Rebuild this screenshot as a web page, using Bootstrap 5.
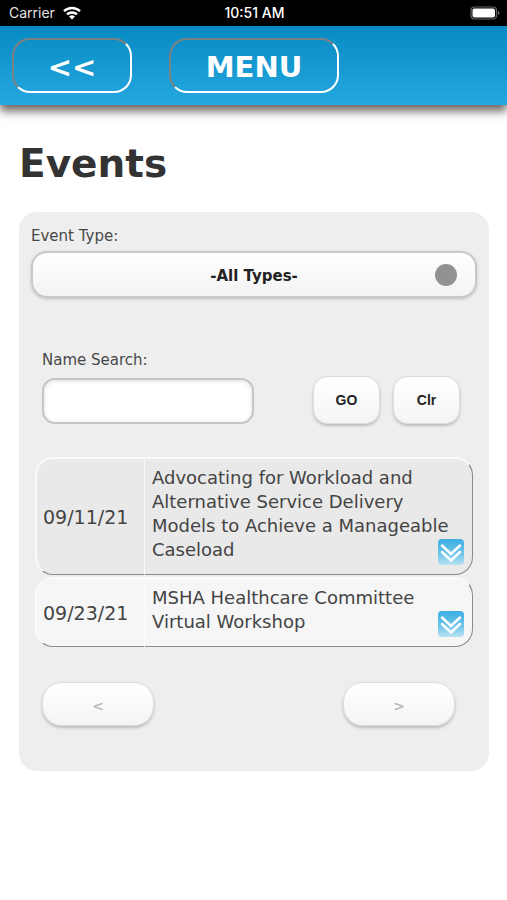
<!DOCTYPE html>
<html lang="en">
<head>
<meta charset="utf-8">
<meta name="viewport" content="width=device-width, initial-scale=1">
<title>Events</title>
<link href="https://cdn.jsdelivr.net/npm/bootstrap@5.3.0/dist/css/bootstrap.min.css" rel="stylesheet">
<style>
  body { font-family: Verdana, "DejaVu Sans", sans-serif; color: #333; background: #fff; }
  .status-bar { height: 26px; background: #000; color: #e4e4e4; font: 14px/26px Inter, sans-serif; padding: 0 7px 0 9px; }
  .status-bar > div { flex: 1 1 0; }
  .clock { color: #fff; font-weight: 500; }
  .top-bar { height: 79px; padding: 0 12px; gap: 37px; background: linear-gradient(#078ac2, #25a8e0); box-shadow: 0 6px 9px #6b625c; }
  .bar-btn { height: 55px; padding: 0; border: 2px solid; border-color: #7d8183 #fff #fff #7d8183; border-radius: 18px; background: none; color: #fff; font-weight: 700; font-size: 29px; line-height: 51px; padding-top: 2px; }
  .back-btn { width: 120px; }
  .menu-btn { width: 170px; }
  .page-main { padding: 35px 18px 24px 19px; }
  .page-title { font-size: 39px; line-height: 48px; font-weight: 700; margin: 0 0 24px; }
  .panel { background: #eee; border-radius: 18px; padding: 12px 12px 45px; }
  .field-label { font-size: 15px; line-height: 24px; color: #484848; }
  .type-box { margin-top: 3px; }
  .type-select { height: 47px; width: 100%; appearance: none; border: 2px solid #c8c8c8; border-radius: 16px; background: linear-gradient(#fff, #f3f3f3); box-shadow: 0 1px 3px #bbb; font-weight: 700; font-size: 15px; padding-top: 4px; color: #222; text-align: center; text-align-last: center; }
  .type-dot { width: 22px; height: 22px; background: #929292; right: 20px; top: 13px; pointer-events: none; }
  .search-row { margin: 50px 17px 0 11px; }
  .search-input { width: 212px; height: 46px; margin-top: 6px; padding: 0 12px; border: 2px solid #c6c6c6; border-radius: 13px; background: #fff; box-shadow: inset 0 1px 4px #ddd; }
  .btn-pair { gap: 13px; }
  .soft-btn { height: 48px; width: 67px; padding: 0; border: 1px solid #dcdcdc; border-radius: 15px; background: linear-gradient(#fff, #f5f5f5); box-shadow: 0 2px 3px #bbb; font: 700 14px "Liberation Sans", Arial, sans-serif; color: #222; }
  .pager-btn { width: 112px; height: 44px; padding-top: 3px; border-radius: 20px; font-family: "DejaVu Sans", sans-serif; }
  .pager-btn:disabled { color: #bbb; }
  .event-table { margin: 31px 0 0 4px; width: calc(100% - 8px); border-collapse: separate; border-spacing: 0 2px; font-size: 18px; line-height: 24px; color: #444; }
  .event-table td { border: 2px solid #fafafa; border-bottom: 1px solid #8c8c8c; padding: 7px 6px 12px; background: #e9e9e9; }
  .event-table tr:nth-child(even) td { background: #f6f6f6; }
  .event-table .date-cell { width: 110px; padding: 9px 0 8px 6px; font-size: 19px; border-right-width: 1px; border-radius: 18px 0 0 18px; }
  .event-table .name-cell { border-left-width: 0; border-right: 1px solid #8c8c8c; border-radius: 0 18px 18px 0; padding-left: 7px; }
  .more-btn { right: 8px; bottom: 9px; }
  .more-btn svg { width: 26px; height: 26px; }
  .pager-row { margin: 33px 22px 0 11px; }
</style>
</head>
<body>
<svg class="position-absolute" width="0" height="0" aria-hidden="true">
  <linearGradient id="expand-fill" x1="0" y1="0" x2="0" y2="1"><stop offset="0" stop-color="#3aaee3"/><stop offset=".6" stop-color="#72c6ea"/><stop offset="1" stop-color="#b9e2f2"/></linearGradient>
  <symbol id="expand-icon" viewBox="0 0 26 26">
    <rect width="26" height="26" rx="4" fill="url(#expand-fill)"/>
    <path d="M4 6.500 13 15 22 6.500M4 13 13 21.500 22 13" fill="none" stroke="#fff" stroke-width="2.500" stroke-linecap="round"/>
  </symbol>
</svg>
<div class="status-bar position-relative z-1 d-flex align-items-center">
  <div class="d-flex align-items-center gap-2">
    <span>Carrier</span>
    <svg width="18" height="14" viewBox="0 0 18 14" aria-hidden="true"><g fill="none" stroke="#fff" stroke-width="2.5"><path d="M1 5.2a11.5 11.5 0 0 1 16 0"/><path d="M4 8.400a7.200 7.200 0 0 1 10 0"/></g><path d="M9 13.600 6 10.600a4.300 4.300 0 0 1 6 0z" fill="#fff"/></svg>
  </div>
  <div class="clock text-center">10:51 AM</div>
  <div class="d-flex justify-content-end">
    <svg width="30" height="14" viewBox="0 0 30 14" aria-hidden="true"><rect x="1" y="1" width="25.500" height="12" rx="3.500" fill="none" stroke="#666" stroke-width="1.200"/><rect x="2.500" y="2.500" width="22.500" height="9" rx="2" fill="#fff"/><path d="M28 5v4q1.500-.5 1.500-2T28 5" fill="#777"/></svg>
  </div>
</div>
<nav class="top-bar d-flex align-items-center">
  <button class="bar-btn back-btn" type="button">&lt;&lt;</button>
  <button class="bar-btn menu-btn" type="button">MENU</button>
</nav>
<main class="page-main">
  <h1 class="page-title">Events</h1>
  <section class="panel">
    <label class="field-label d-block" for="eventType">Event Type:</label>
    <div class="type-box position-relative">
      <select class="type-select d-block" id="eventType"><option>-All Types-</option></select>
      <span class="type-dot position-absolute rounded-circle"></span>
    </div>
    <form class="search-row d-flex justify-content-between align-items-end">
      <div>
        <label class="field-label d-block" for="nameSearch">Name Search:</label>
        <input class="search-input d-block" id="nameSearch" type="text">
      </div>
      <div class="btn-pair d-flex">
        <button class="soft-btn" type="button">GO</button>
        <button class="soft-btn" type="reset">Clr</button>
      </div>
    </form>
    <table class="event-table">
      <tbody>
        <tr>
          <td class="date-cell">09/11/21</td>
          <td class="name-cell position-relative">Advocating for Workload and Alternative Service Delivery Models to Achieve a Manageable Caseload
            <button class="more-btn position-absolute border-0 p-0 bg-transparent" type="button" aria-label="Show details"><svg class="d-block" aria-hidden="true"><use href="#expand-icon"/></svg></button></td>
        </tr>
        <tr>
          <td class="date-cell">09/23/21</td>
          <td class="name-cell position-relative">MSHA Healthcare Committee Virtual Workshop
            <button class="more-btn position-absolute border-0 p-0 bg-transparent" type="button" aria-label="Show details"><svg class="d-block" aria-hidden="true"><use href="#expand-icon"/></svg></button></td>
        </tr>
      </tbody>
    </table>
    <div class="pager-row d-flex justify-content-between">
      <button class="soft-btn pager-btn" type="button" disabled>&lt;</button>
      <button class="soft-btn pager-btn" type="button" disabled>&gt;</button>
    </div>
  </section>
</main>
<script src="https://cdn.jsdelivr.net/npm/bootstrap@5.3.0/dist/js/bootstrap.bundle.min.js"></script>
</body>
</html>
